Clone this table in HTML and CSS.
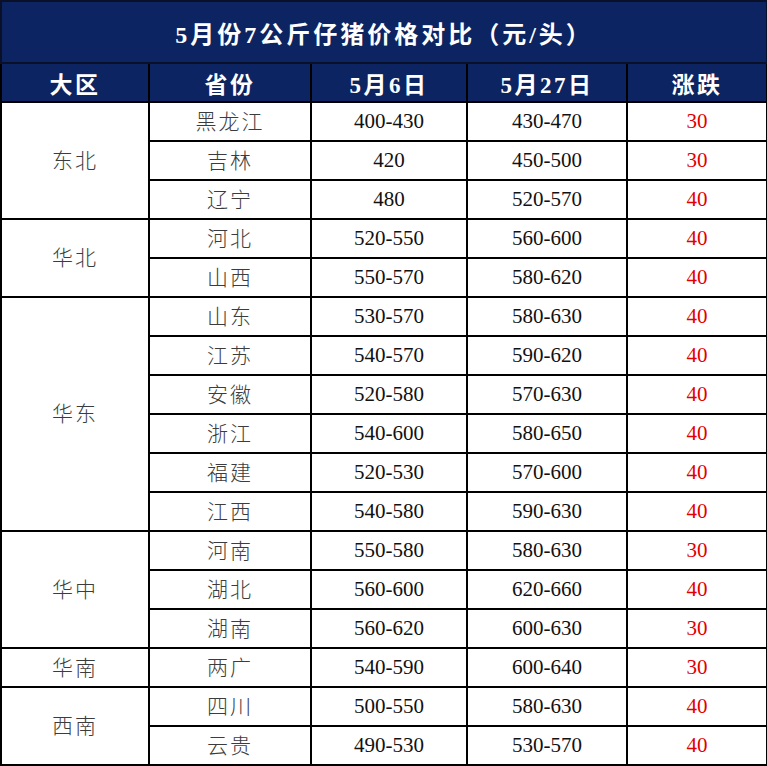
FILE: index.html
```html
<!DOCTYPE html>
<html lang="zh">
<head>
<meta charset="utf-8">
<link rel="stylesheet" href="styles.css">
</head>
<body>
<table class="price">
  <colgroup>
    <col class="c1"><col class="c2"><col class="c3"><col class="c4"><col class="c5">
  </colgroup>
  <thead>
    <tr class="title"><th colspan="5">5月份7公斤仔猪价格对比（元/头）</th></tr>
    <tr class="head"><th>大区</th><th>省份</th><th>5月6日</th><th>5月27日</th><th>涨跌</th></tr>
  </thead>
  <tbody>
    <tr><td class="zh region" rowspan="3">东北</td><td class="zh">黑龙江</td><td>400-430</td><td>430-470</td><td class="up">30</td></tr>
    <tr><td class="zh">吉林</td><td>420</td><td>450-500</td><td class="up">30</td></tr>
    <tr><td class="zh">辽宁</td><td>480</td><td>520-570</td><td class="up">40</td></tr>
    <tr><td class="zh region" rowspan="2">华北</td><td class="zh">河北</td><td>520-550</td><td>560-600</td><td class="up">40</td></tr>
    <tr><td class="zh">山西</td><td>550-570</td><td>580-620</td><td class="up">40</td></tr>
    <tr><td class="zh region" rowspan="6">华东</td><td class="zh">山东</td><td>530-570</td><td>580-630</td><td class="up">40</td></tr>
    <tr><td class="zh">江苏</td><td>540-570</td><td>590-620</td><td class="up">40</td></tr>
    <tr><td class="zh">安徽</td><td>520-580</td><td>570-630</td><td class="up">40</td></tr>
    <tr><td class="zh">浙江</td><td>540-600</td><td>580-650</td><td class="up">40</td></tr>
    <tr><td class="zh">福建</td><td>520-530</td><td>570-600</td><td class="up">40</td></tr>
    <tr><td class="zh">江西</td><td>540-580</td><td>590-630</td><td class="up">40</td></tr>
    <tr><td class="zh region" rowspan="3">华中</td><td class="zh">河南</td><td>550-580</td><td>580-630</td><td class="up">30</td></tr>
    <tr><td class="zh">湖北</td><td>560-600</td><td>620-660</td><td class="up">40</td></tr>
    <tr><td class="zh">湖南</td><td>560-620</td><td>600-630</td><td class="up">30</td></tr>
    <tr><td class="zh region">华南</td><td class="zh">两广</td><td>540-590</td><td>600-640</td><td class="up">30</td></tr>
    <tr><td class="zh region" rowspan="2">西南</td><td class="zh">四川</td><td>500-550</td><td>580-630</td><td class="up">40</td></tr>
    <tr><td class="zh">云贵</td><td>490-530</td><td>530-570</td><td class="up">40</td></tr>
  </tbody>
</table>
</body>
</html>
```
FILE: styles.css
```css
html, body {
  margin: 0;
  padding: 0;
  background: #fff;
}

.price {
  border-collapse: collapse;
  table-layout: fixed;
  width: 766px;
  border: 2px solid #000;
  font-family: "Liberation Serif", "Noto Sans CJK SC", serif;
}

.c1 { width: 148px; }
.c2 { width: 162px; }
.c3 { width: 156px; }
.c4 { width: 160px; }
.c5 { width: 140px; }

.price th,
.price td {
  border: 2px solid #000;
  text-align: center;
  vertical-align: middle;
  padding: 0;
}

.title th {
  height: 60px;
  background: #0c2462;
  color: #fff;
  font-size: 24px;
  font-weight: bold;
  letter-spacing: 3px;
  border-color: #0a0f2a;
}

.head th {
  height: 37px;
  background: #0c2462;
  color: #fff;
  font-size: 23px;
  font-weight: bold;
  letter-spacing: 2.5px;
  border-color: #000;
}

.price td {
  height: 37px;
  font-size: 21px;
  line-height: 1;
  color: #111;
}

.price td.zh {
  height: 34px;
  padding-bottom: 3px;
  font-family: "Noto Sans CJK SC", sans-serif;
  font-weight: 300;
  color: #3c3c3c;
  font-size: 21px;
  letter-spacing: 2px;
}

.price td.region {
  border-right-width: 1px;
}

.price td.up {
  color: #e30000;
}
```
